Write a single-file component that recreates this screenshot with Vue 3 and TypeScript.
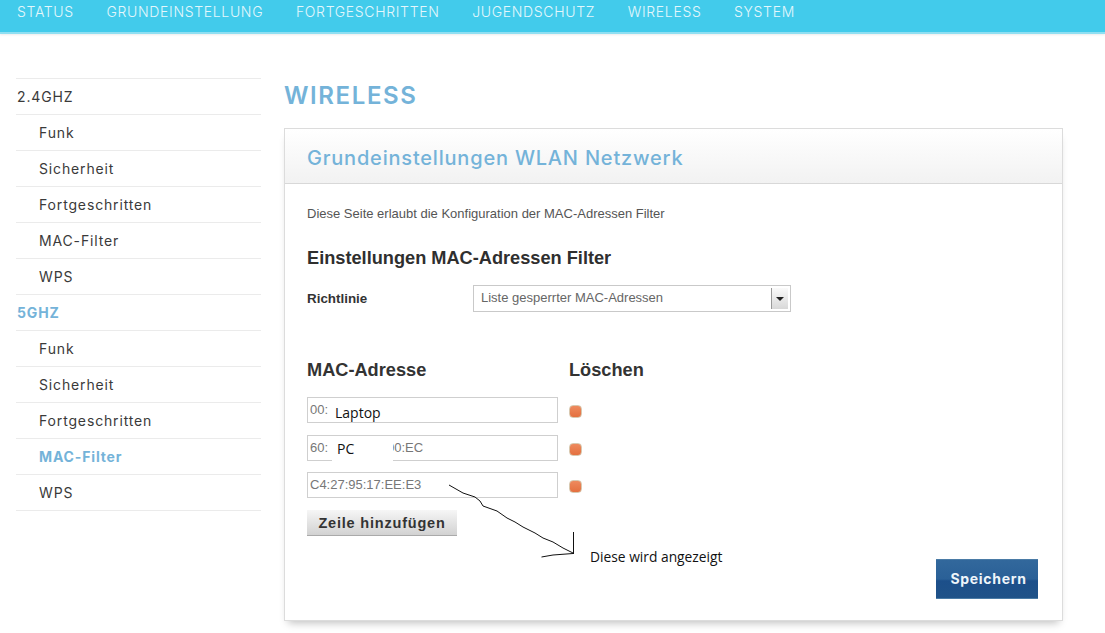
<script setup lang="ts">
const navItems: string[] = ['STATUS', 'GRUNDEINSTELLUNG', 'FORTGESCHRITTEN', 'JUGENDSCHUTZ', 'WIRELESS', 'SYSTEM']
interface SideItem { label: string; sub: boolean; active: boolean }
const side: SideItem[] = [
  { label: '2.4GHZ', sub: false, active: false },
  { label: 'Funk', sub: true, active: false },
  { label: 'Sicherheit', sub: true, active: false },
  { label: 'Fortgeschritten', sub: true, active: false },
  { label: 'MAC-Filter', sub: true, active: false },
  { label: 'WPS', sub: true, active: false },
  { label: '5GHZ', sub: false, active: true },
  { label: 'Funk', sub: true, active: false },
  { label: 'Sicherheit', sub: true, active: false },
  { label: 'Fortgeschritten', sub: true, active: false },
  { label: 'MAC-Filter', sub: true, active: true },
  { label: 'WPS', sub: true, active: false }
]
</script>

<template>
  <div class="page">
    <nav class="nav">
      <a v-for="n in navItems" :key="n" class="nav-item">{{ n }}</a>
    </nav>
    <div class="content">
      <aside class="side">
        <div
          v-for="(s, i) in side"
          :key="i"
          class="side-row"
          :class="{ sub: s.sub, active: s.active }"
        >{{ s.label }}</div>
      </aside>
      <main class="main">
        <h1 class="title">WIRELESS</h1>
        <section class="card">
          <header class="card-head">Grundeinstellungen WLAN Netzwerk</header>
          <div class="card-body">
            <p class="intro">Diese Seite erlaubt die Konfiguration der MAC-Adressen Filter</p>
            <h2 class="h-filter">Einstellungen MAC-Adressen Filter</h2>
            <div class="policy">
              <span class="policy-label">Richtlinie</span>
              <div class="select">
                <span class="select-text">Liste gesperrter MAC-Adressen</span>
                <span class="select-btn"><i class="caret"></i></span>
              </div>
            </div>
            <div class="cols">
              <span class="col-mac">MAC-Adresse</span>
              <span>Löschen</span>
            </div>
            <div class="mac-row r1">
              <div class="mac-input"><span>00:</span><span class="note note-laptop">Laptop</span></div>
              <i class="del"></i>
            </div>
            <div class="mac-row r2">
              <div class="mac-input"><span>60:</span><span class="mac-end">00:EC</span><span class="note note-pc">PC</span></div>
              <i class="del"></i>
            </div>
            <div class="mac-row r3">
              <div class="mac-input"><span>C4:27:95:17:EE:E3</span></div>
              <i class="del"></i>
            </div>
            <button class="add" type="button">Zeile hinzufügen</button>
            <div class="save-row">
              <button class="save" type="button">Speichern</button>
            </div>
          </div>
        </section>
      </main>
    </div>
    <svg class="arrow" width="1105" height="633" viewBox="0 0 1105 633" fill="none" stroke="#111" stroke-width="1">
      <path d="M449 485L456 489L463 493L475 497L480 501L483 506L497 511L507 518L515 522L523 527L535 533L543 538L553 542L563 548L573 553" />
      <path d="M573.500 532V554" />
      <path d="M541.500 557L553 555L573 553.500" />
    </svg>
    <span class="annotation">Diese wird angezeigt</span>
  </div>
</template>

<style>
html, body { margin: 0; background: #fff; overflow: hidden; }
</style>

<style scoped>
.page {
  position: relative;
  width: 1105px;
  height: 633px;
  overflow: hidden;
  background: #fff;
  font-family: Inter, "Liberation Sans", sans-serif;
  color: #333;
}
.nav {
  display: flex;
  gap: 32.700px;
  box-sizing: border-box;
  height: 34px;
  padding: 2px 0 0 17px;
  background: #42cbeb;
  border-bottom: 2px solid #8fdff2;
  box-shadow: 0 1px 2px rgba(0, 0, 0, 0.08);
}
.nav-item {
  color: #e4f7fc;
  font-size: 14px;
  font-weight: 300;
  line-height: 20px;
  letter-spacing: 0.66px;
}
.content {
  display: flex;
  padding: 44px 0 0 16px;
  gap: 23px;
}
.side {
  width: 245px;
  flex: none;
  border-top: 1px solid #ebebeb;
}
.side-row {
  box-sizing: border-box;
  height: 36px;
  line-height: 36px;
  border-bottom: 1px solid #ebebeb;
  font-size: 14px;
  letter-spacing: 0.85px;
  padding-left: 1px;
  color: #3a3a3a;
}
.side-row.sub { padding-left: 23px; }
.side-row.active { color: #74b3d9; font-weight: 700; }
.main { flex: none; width: 779px; }
.title {
  margin: 0;
  height: 50px;
  font-size: 24px;
  line-height: 35px;
  font-weight: 600;
  letter-spacing: 1.6px;
  color: #74b3d9;
}
.card {
  box-sizing: border-box;
  width: 779px;
  height: 493px;
  border: 1px solid #dcdcdc;
  background: #fff;
  box-shadow: 0 6px 8px -4px rgba(0, 0, 0, 0.25);
}
.card-head {
  box-sizing: border-box;
  height: 55px;
  padding-left: 22px;
  line-height: 58px;
  font-size: 20px;
  font-weight: 500;
  letter-spacing: 0.8px;
  color: #74b3d9;
  background: linear-gradient(#fff, #f2f2f2);
  border-bottom: 1px solid #d8d8d8;
}
.card-body {
  padding: 23px 22px 0;
  font-family: "Liberation Sans", Arial, sans-serif;
}
.intro {
  margin: 0;
  font-size: 13px;
  line-height: 14px;
  color: #555;
}
.h-filter {
  margin: 27px 0 0;
  font-size: 18.200px;
  line-height: 20px;
  font-weight: 700;
  color: #2f2f2f;
}
.policy {
  display: flex;
  align-items: center;
  margin-top: 17px;
  height: 27px;
}
.policy-label {
  width: 166px;
  font-size: 13.400px;
  font-weight: 700;
  color: #333;
}
.select {
  box-sizing: border-box;
  width: 318px;
  height: 27px;
  border: 1px solid #c9c9c9;
  padding: 0 2px 0 7px;
  display: flex;
  align-items: center;
  justify-content: space-between;
  font-size: 13px;
  color: #666;
}
.select-text { margin-top: -2px; }
.select-btn {
  box-sizing: border-box;
  width: 17px;
  height: 21px;
  border-left: 1px solid #999;
  background: linear-gradient(#fafafa, #d8d8d8);
  display: flex;
  align-items: center;
  justify-content: center;
}
.caret {
  display: block;
  border-left: 4px solid transparent;
  border-right: 4px solid transparent;
  border-top: 4px solid #222;
}
.cols {
  display: flex;
  margin-top: 47px;
  font-size: 18.200px;
  line-height: 22px;
  font-weight: 700;
  color: #333;
}
.col-mac { width: 262px; }
.mac-row {
  display: flex;
  align-items: center;
  gap: 11px;
}
.r1 { margin-top: 16px; }
.r2 { margin-top: 12px; }
.r3 { margin-top: 11px; }
.mac-input {
  position: relative;
  box-sizing: border-box;
  width: 251px;
  height: 26px;
  border: 1px solid #cfcfcf;
  padding: 0 2px;
  line-height: 24px;
  font-size: 13px;
  color: #777;
  white-space: nowrap;
}
.mac-end {
  position: absolute;
  left: 79px;
  top: 0;
}
.note {
  position: absolute;
  top: 1px;
  font-family: "Open Sans", sans-serif;
  font-size: 14px;
  color: #111;
}
.note-laptop { left: 27px; top: 3px; }
.note-pc {
  left: 24px;
  width: 51px;
  padding-left: 5px;
  padding-right: 5px;
  background: #fff;
}
.del {
  display: block;
  box-sizing: border-box;
  width: 13px;
  height: 13px;
  margin-top: 2px;
  border-radius: 4px;
  background: linear-gradient(#ee8a5e, #e4703f);
  border: 1px solid #d8c8b0;
}
.add {
  display: block;
  box-sizing: border-box;
  margin-top: 12px;
  width: 150px;
  height: 26px;
  padding: 0;
  border: 0;
  border-bottom: 1px solid #aaa;
  background: linear-gradient(#f6f6f6, #d2d2d2);
  font-family: "Liberation Sans", Arial, sans-serif;
  font-size: 14.500px;
  font-weight: 700;
  letter-spacing: 0.8px;
  color: #333;
}
.save-row {
  display: flex;
  justify-content: flex-end;
  margin: 23px 2px 0 0;
}
.save {
  box-sizing: border-box;
  width: 102px;
  height: 40px;
  padding: 0 0 2px 3px;
  border: 0;
  border-top: 1px solid #4a7ba6;
  border-bottom: 1px solid #4a7ba6;
  background: linear-gradient(#32689c 0%, #2a6097 50%, #1c4f8a 55%, #1f5288 100%);
  font-family: Inter, "Liberation Sans", sans-serif;
  font-size: 14px;
  font-weight: 700;
  letter-spacing: 0.7px;
  color: #eef5fa;
}
.arrow {
  position: absolute;
  left: 0;
  top: 0;
  pointer-events: none;
}
.annotation {
  position: absolute;
  left: 590px;
  top: 548px;
  font-family: "Open Sans", sans-serif;
  font-size: 13.800px;
  line-height: 18px;
  color: #111;
}
</style>
